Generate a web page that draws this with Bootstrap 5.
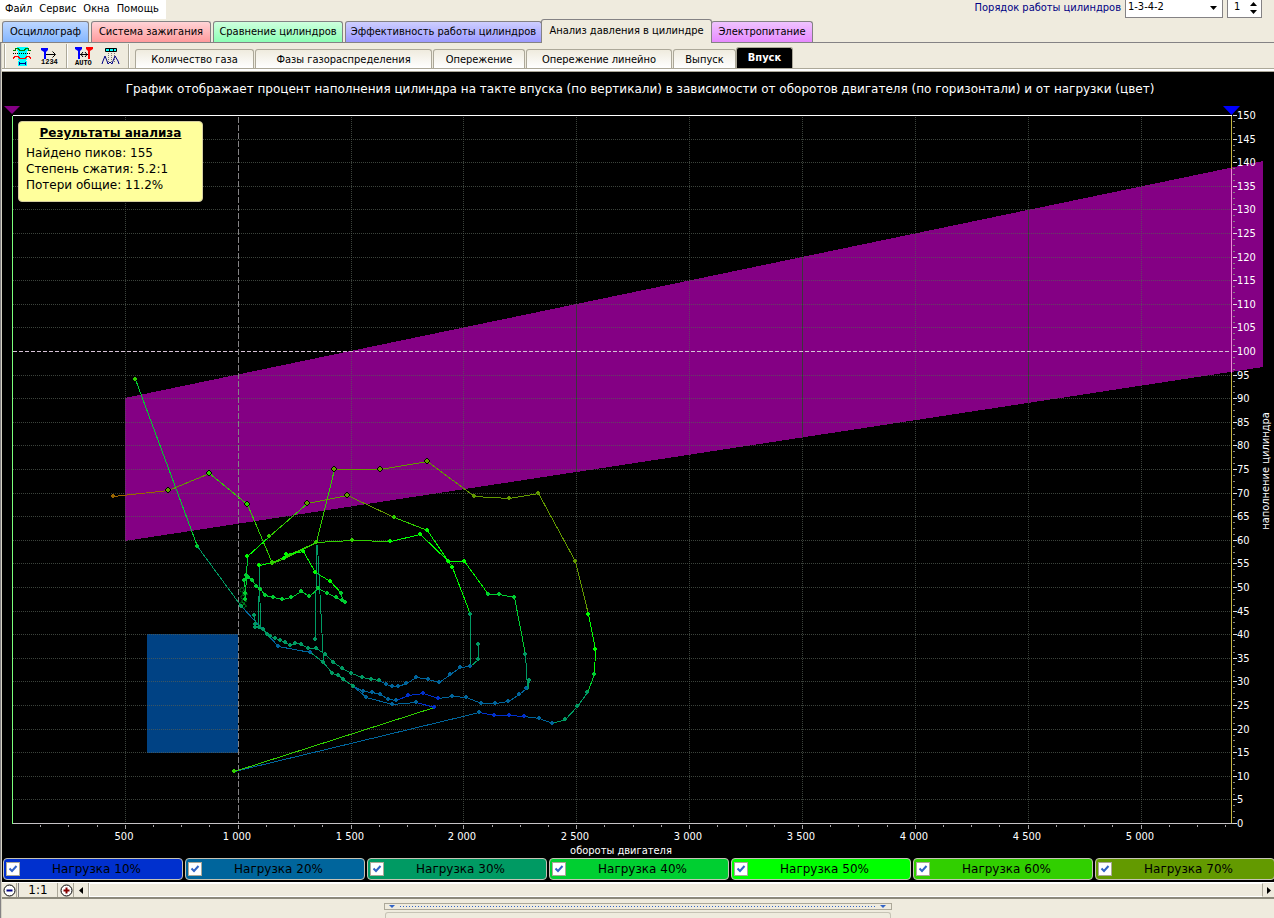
<!DOCTYPE html>
<html lang="ru">
<head>
<meta charset="utf-8">
<meta name="viewport" content="width=device-width, initial-scale=1">
<title>Анализ давления в цилиндре</title>
<link href="https://cdn.jsdelivr.net/npm/bootstrap@5.3.0/dist/css/bootstrap.min.css" rel="stylesheet">
<style>
:root{--face:#efebde;--edge:#848284;--soft:#aca899}
body{background:var(--face);color:#000;font:11px/14px "DejaVu Sans Condensed","DejaVu Sans",sans-serif;overflow-x:hidden}
a{color:#000;text-decoration:none}
.topline{height:21px}
.menu-strip{background:#fff;height:19px;width:166px;padding:2px 0 0 5px;gap:7px}
.order-label{color:#000084;padding-top:1px}
.pick{height:18px;width:98px;border:1px solid var(--edge);border-top:0;border-radius:0;padding:0 2px 3px;background:#fff url("data:image/svg+xml,%3Csvg xmlns='http://www.w3.org/2000/svg' width='7' height='4'%3E%3Cpath d='M0 0h7L3.5 4z'/%3E%3C/svg%3E") no-repeat right 5px top 6px;appearance:none;color:#000;font-size:11px;line-height:14px}
.spin{height:18px;width:35px;border:1px solid var(--edge);border-top:0;background:#fff}
.spin input{width:18px;border:0;padding:0 0 3px 6px;appearance:textfield;-moz-appearance:textfield;background:none}
.spin input::-webkit-inner-spin-button{display:none}
.bare{border:0;background:none;padding:0;color:#000;line-height:1}
.spin .bare{height:8px;width:14px;display:flex;align-items:center;justify-content:center}
.main-tabs{height:22px;border-bottom:1px solid var(--edge);padding-left:2px;gap:2px}
.main-tabs a{height:21px;border:1px solid var(--edge);border-bottom:0;border-radius:3px 3px 0 0;text-align:center;padding-top:3px;white-space:nowrap;flex:none}
.t-blue{background:linear-gradient(#bdd7ff,#84b6ff);width:87px}
.t-red{background:linear-gradient(#ffd3d6,#ff9a9c);width:120px}
.t-green{background:linear-gradient(#ceffde,#8cffb5);width:130px}
.t-violet{background:linear-gradient(#ceceff,#9c9aff);width:197px}
.main-tabs .t-active{background:var(--face);width:171px;height:24px;margin:0 -3px -1px;z-index:1;padding-top:4px}
.t-pink{background:linear-gradient(#efc3ff,#e78aff);width:102px}
.work{border-left:1px solid var(--edge);min-height:875px}
.work-in{border-left:1px solid #d6d3c6}
.tools{height:26px;border-bottom:1px solid var(--soft)}
.tools .bare{height:22px}
.groove{width:2px;height:24px;border-left:1px solid var(--soft);border-right:1px solid #fff;flex:none}
.strip{padding:0 5px 0 2px}
.sub-tabs a{height:19px;border:1px solid var(--soft);border-bottom:0;border-radius:3px 3px 0 0;background:linear-gradient(#efebde,#fff);text-align:center;padding-top:3px;white-space:nowrap;flex:none}
.sub-tabs{gap:1px}
.s1{width:119px}.s2{width:177px}.s3{width:92px}.s4{width:146px}.s5{width:63px}
.sub-tabs .s6{width:57px;height:21px;background:#000;color:#fff;font-weight:bold;margin-left:-1px;border-color:var(--soft)}
.rim{height:3px;background:#fff;border-bottom:1px solid var(--soft)}
.verd{font:12px/16px "DejaVu Sans",sans-serif}
.chart{background:#000}
.chart h1{color:#fff;margin:0;padding:9px 0 4px 4px;text-align:center;white-space:nowrap}
.chart svg{display:block;width:100%;height:auto}
.results{left:16px;top:49px;width:185px;height:81px;background:#ffff9c;border:1px solid #d6cfa0;border-radius:4px;padding:3px 7px}
.results h2{font:bold 12px/16px "DejaVu Sans",sans-serif;text-decoration:underline;text-align:center;margin:0 0 4px}
.legend-row{background:#000;padding:0 0 2px 1px;gap:2px;overflow:hidden}
.legend-row label{flex:1 0 180px;height:22px;border:1px solid #c6c3b5;border-radius:4px;padding:0 9px 0 2px;color:#000}
.legend-row input{appearance:none;width:14px;height:14px;margin:0;border:1px solid var(--soft);background:#fff;flex:none}
.legend-row input:checked{background:#fff url("data:image/svg+xml,%3Csvg xmlns='http://www.w3.org/2000/svg' width='12' height='12'%3E%3Cpath d='M2.5 5.5L5 8l4.500-5' fill='none' stroke='%233163c6' stroke-width='2'/%3E%3C/svg%3E")}
.q10{background:#0030ce}.q20{background:#00659c}.q30{background:#009a63}.q40{background:#00cf31}.q50{background:#00ff00}.q60{background:#31cf00}.q70{background:#639a00}
.scroller{height:17px;border-bottom:2px solid #8c897b;border-top:1px solid #fff}
.scroller .bare{width:15px;height:14px;border-right:1px solid var(--soft);display:flex;align-items:center;justify-content:center}
.scroller .one{width:40px;border-left:1px solid var(--edge);margin:0 1px}
.scroller .last-arrow{width:11px;border-right:0}
.thumb{border:1px solid #fff;border-right-color:var(--soft);height:14px}
.splitter{width:40%;height:7px;border:1px solid var(--soft);margin:4px auto 0}
.dots{height:1px;background:repeating-linear-gradient(90deg,#3163c6 0 1px,transparent 1px 3px)}
.lower{width:506px;max-width:40%;height:7px;margin:2px auto 0;border:1px solid #c6c3b5;border-bottom:0;border-radius:3px 3px 0 0}
</style>
</head>
<body>
<header class="topline d-flex justify-content-between">
  <nav class="menu-strip d-flex" aria-label="Меню">
    <a href="#">Файл</a><a href="#">Сервис</a><a href="#">Окна</a><a href="#">Помощь</a>
  </nav>
  <div class="d-flex pe-2 me-1">
    <label class="order-label me-1" for="order">Порядок работы цилиндров</label>
    <select id="order" class="pick me-1"><option>1-3-4-2</option></select>
    <div class="spin d-flex">
      <input type="number" value="1" aria-label="Номер цилиндра">
      <div>
        <button class="bare" aria-label="Больше"><svg width="7" height="4"><path d="M0 4h7L3.500 0z"/></svg></button>
        <button class="bare" aria-label="Меньше"><svg width="7" height="4"><path d="M0 0h7L3.500 4z"/></svg></button>
      </div>
    </div>
  </div>
</header>
<nav class="main-tabs d-flex align-items-end" aria-label="Разделы">
  <a class="t-blue" href="#">Осциллограф</a><a class="t-red" href="#">Система зажигания</a><a class="t-green" href="#">Сравнение цилиндров</a><a class="t-violet" href="#">Эффективность работы цилиндров</a><a class="t-active" href="#">Анализ давления в цилиндре</a><a class="t-pink" href="#">Электропитание</a>
</nav>
<main class="work"><div class="work-in">
  <div class="tools d-flex align-items-end">
    <div class="strip d-flex align-items-center h-100">
      <div class="groove"></div>
      <button class="bare" aria-label="Область анализа">
        <svg width="31" height="22" viewBox="6 45 31 22" shape-rendering="crispEdges"><path fill="#00ffff" d="M17 47h11v4h-1v9h-1v1h1v5h-9v-5h1v-1h-1V51h-1z"/><path d="M13 53.500h18" stroke="#000" stroke-dasharray="1 1"/><g fill="none"><path d="M13 50.500h2l1-2h2l2 2h4l2-2h2l1 2h2" stroke="#008200"/><path d="M13 58.500l2-2h3l2 2h5l2-2h2l2 2" stroke="red"/><path d="M19 63.500h7M19.500 62v3M25.500 62v3" stroke="#000084"/></g></svg>
      </button>
      <button class="bare" aria-label="Нумерация">
        <svg width="29" height="22" viewBox="37 45 29 22"><path fill="#0000ff" d="M41 48h7v2l-2 2v7h-2v-7l-3-2z"/><path d="M46 54.500h9M52.500 51.500l3 3-3 3" fill="none" stroke="#000"/><text x="41" y="64" font-size="7" font-weight="bold" font-family="Liberation Mono,monospace">1234</text></svg>
      </button>
      <div class="groove"></div>
      <button class="bare" aria-label="Автоматически">
        <svg width="30" height="22" viewBox="68 45 30 22"><path fill="#0000ff" d="M75 47h7v2l-2 2v8h-2v-8l-3-2z"/><path fill="red" d="M86 47h7v2l-3 2v8h-2v-8l-2-2z"/><path d="M80 54.500h8M83 52l-2 2.500 2 2.500M85 52l2 2.500-2 2.500" fill="none" stroke="#000"/><text x="75" y="65" font-size="7" font-weight="bold" font-family="Liberation Mono,monospace">AUTO</text></svg>
      </button>
      <button class="bare" aria-label="Пики">
        <svg width="30" height="22" viewBox="98 45 30 22"><path fill="#00ffff" stroke="#000" d="M105.500 48.500h11v3h-11zM109.500 49v2M113.500 49v2"/><path d="M108.500 53v10M111.500 53v10M114.500 53v10" stroke="#777" stroke-dasharray="1 1"/><path d="M102 64l1-3 2-5 2 5 1 3 2-2 2 2 1-3 2-5 3 5 1 3" fill="none" stroke="#000084"/></svg>
      </button>
      <div class="groove"></div>
    </div>
    <nav class="sub-tabs d-flex align-items-end" aria-label="Графики">
      <a class="s1" href="#">Количество газа</a><a class="s2" href="#">Фазы газораспределения</a><a class="s3" href="#">Опережение</a><a class="s4" href="#">Опережение линейно</a><a class="s5" href="#">Выпуск</a><a class="s6" href="#">Впуск</a>
    </nav>
  </div>
  <div class="rim"></div>
  <section class="chart position-relative">
    <h1 class="verd">График отображает процент наполнения цилиндра на такте впуска (по вертикали) в зависимости от оборотов двигателя (по горизонтали) и от нагрузки (цвет)</h1>
    <svg id="plot" viewBox="2 101 1272 757" font-family="DejaVu Sans Condensed,sans-serif" font-size="11" fill="#fff" role="img" aria-label="Наполнение цилиндра"></svg>
    <aside class="results verd position-absolute"><h2>Результаты анализа</h2>Найдено пиков: 155<br>Степень сжатия: 5.2:1<br>Потери общие: 11.2%</aside>
  </section>
  <div class="legend-row d-flex verd">
    <label class="q10 d-flex align-items-center"><input type="checkbox" checked><span class="flex-fill text-center">Нагрузка 10%</span></label>
    <label class="q20 d-flex align-items-center"><input type="checkbox" checked><span class="flex-fill text-center">Нагрузка 20%</span></label>
    <label class="q30 d-flex align-items-center"><input type="checkbox" checked><span class="flex-fill text-center">Нагрузка 30%</span></label>
    <label class="q40 d-flex align-items-center"><input type="checkbox" checked><span class="flex-fill text-center">Нагрузка 40%</span></label>
    <label class="q50 d-flex align-items-center"><input type="checkbox" checked><span class="flex-fill text-center">Нагрузка 50%</span></label>
    <label class="q60 d-flex align-items-center"><input type="checkbox" checked><span class="flex-fill text-center">Нагрузка 60%</span></label>
    <label class="q70 d-flex align-items-center"><input type="checkbox" checked><span class="flex-fill text-center">Нагрузка 70%</span></label>
  </div>
  <div class="scroller d-flex">
    <button class="bare" aria-label="Уменьшить"><svg width="13" height="13"><circle cx="6.500" cy="6.500" r="5.500" fill="#fff" stroke="#000"/><path d="M3.500 6.500h6" stroke="#000084" stroke-width="2"/></svg></button>
    <button class="bare one verd">1:1</button>
    <button class="bare" aria-label="Увеличить"><svg width="13" height="13"><circle cx="6.500" cy="6.500" r="5.500" fill="#fff" stroke="#000"/><path d="M3.500 6.500h6M6.500 3.500v6" stroke="#840000" stroke-width="2"/></svg></button>
    <button class="bare" aria-label="Влево"><svg width="4" height="7"><path d="M4 0v7L0 3.500z"/></svg></button>
    <div class="thumb flex-fill"></div>
    <button class="bare last-arrow" aria-label="Вправо"><svg width="4" height="7"><path d="M0 0v7l4-3.500z"/></svg></button>
  </div>
  <div class="splitter d-flex align-items-center px-1">
    <svg width="7" height="4" fill="#3163c6"><path d="M0 0h6L3 3z"/></svg><div class="dots flex-fill mx-1"></div><svg width="7" height="4" fill="#3163c6"><path d="M0 0h6L3 3z"/></svg>
  </div>
  <div class="lower"></div>
</div></main>
<script>
const col={1:'#0030ce',2:'#00659c',3:'#009a63',4:'#00cf31',5:'#00ff00',6:'#31cf00',7:'#639a00',8:'#9c6500'};
const px=v=>Math.round(12+v*.2257), py=v=>Math.round(823-v*4.72);
let s='<g shape-rendering="crispEdges" fill="none">';
const line=(x1,y1,x2,y2,c,d)=>{s+=`<path d="M${x1+.5} ${y1+.5}L${x2+.5} ${y2+.5}" stroke="${c}"${d?` stroke-dasharray="${d}"`:''}/>`};
s+='<path fill="#840084" d="M125 398L1263 161V367L125 541z"/><path fill="#004284" d="M147 634h91v119h-91z"/>';
const grid='rgba(85,95,85,.7)';
for(let v=5;v<150;v+=5) if(v!=100) line(12,py(v),1231,py(v),grid,'1 1');
for(let v=500;v<=5000;v+=500) if(v!=1000) line(px(v),116,px(v),823,grid,'1 1');
for(const v of [2500,3500,4500]) line(px(v),py(90+(v-500)/100),px(v),py(60+(v-500)*.00726),'#3c343c');
line(12,py(100),1231,py(100),'#d6c3d6','4 2');
line(px(1000),116,px(1000),823,'#848284','6 2');
line(12,115,1231,115,'#fff'); line(12,115,12,823,'#7bff7b'); line(1231,115,1231,823,'#c6b642'); line(12,823,1235,823,'#c6c3c6');
line(1231,168,1231,372,'#ef86d6');
for(let i=0;i<=120;i++) line(1232,py(i*1.25),i%4?1234:1236,py(i*1.25),i%4?'#848284':'#ddd');
for(let v=125;v<5400;v+=125) line(px(v),824,px(v),v%500?826:828,'#a5a2a5');
/* peaks: x, y, load class; each segment takes the load of its first point */
const runs=[
[[197,546,4],[135,379,6]],
[[241,606,3],[197,546,4]],
[[113,496,8],[168,490,7],[209,473,6],[247,504,6],[272,563,6],[284,558,6],[316,542,6],[334,469,7],[380,469,7],[427,461,7],[474,496,7],[509,498,7],[538,493,7],[575,561,7],[588,614,5],[595,649,5],[594,674,4],[587,692,3],[577,706,3],[565,719,3],[552,723,2],[539,718,2],[524,716,1],[509,715,1],[494,715,1],[479,712,2],[234,771,6],[434,707,1],[416,702,2],[392,704,2],[366,697,2],[353,686,2]],
[[247,556,5],[269,536,6],[307,503,7],[347,495,7],[394,517,6],[427,530,5],[452,567,5],[470,614,3],[470,666,3],[478,659,3],[478,644,3]],
[[259,565,5],[272,562,6],[316,542,6],[352,540,6],[390,541,5],[420,534,5],[448,561,5],[464,561,5],[488,594,4],[499,594,4],[514,597,4],[525,654,3],[527,688,3],[529,680,3]],
[[526,688,2],[519,694,2],[508,701,2],[495,703,2],[481,703,2],[466,697,2],[452,696,2],[438,698,1],[423,693,1],[408,695,1],[396,700,2],[388,699,2],[380,694,2],[372,692,2],[363,691,2],[353,686,3],[343,679,3],[338,675,3],[332,673,3],[323,662,3],[310,652,2],[278,646,2],[241,606,3]],
[[470,666,2],[460,667,2],[450,674,2],[439,682,2],[428,679,2],[416,677,2],[406,683,2],[398,686,2],[392,686,2],[386,684,2],[379,680,3],[371,679,3],[362,677,3],[351,673,3],[342,668,3],[333,662,3],[325,654,3],[316,648,3],[308,648,3],[301,644,3],[295,643,3],[290,645,3],[285,642,3],[280,640,3],[275,638,3],[270,636,3],[267,634,3],[263,629,3],[259,627,3],[255,627,3],[255,624,3],[254,615,3]],
[[286,554,5],[303,551,5],[315,572,5],[330,581,5],[341,593,4],[342,600,4],[345,602,4],[336,597,4],[327,593,4],[318,588,4],[309,596,4],[301,591,4],[291,597,4],[282,599,4],[273,597,4],[265,595,4],[260,589,4],[256,586,4],[252,580,4],[248,577,4],[246,575,4],[244,580,4],[245,593,4],[245,599,4]],
[[284,558,5],[286,554,5]]];
const inBand=(x,y)=>x>125&&y>400&&y<541-(x-125)*.153;
let marks='<g shape-rendering="crispEdges">';
const dot=(x,y,c)=>{
  if(inBand(x,y)) marks+=`<path fill="#000" d="M${x-1} ${y-3}h2v1h1v1h1v2h-1v1h-1v1h-2v-1h-1v-1h-1v-2h1v-1h1z"/>`;
  marks+=`<path fill="${c}" d="M${x-1} ${y-2}h2v1h1v2h-1v1h-2v-1h-1v-2h1z"/>`;
};
for(const r of runs) r.forEach((p,i)=>{
  if(r[i+1]) line(p[0],p[1],r[i+1][0],r[i+1][1],col[p[2]]);
  dot(p[0],p[1],col[p[2]]);
});
line(259,565,258,628,col[3]);line(259,575,260,628,col[3]);line(316,545,315,639,col[3]);line(317,545,323,662,col[3]);line(247,556,245,594,col[4]);
dot(315,639,col[3]);
s+='</g>'+marks+'</g>';
for(const p of [[242,590],[245,594],[243,597],[244,601],[242,604],[244,606],[257,625]]) s+=`<circle cx="${p[0]}" cy="${p[1]}" r="2" fill="none" stroke="${col[p[0]>250?3:4]}" stroke-dasharray="1 1"/>`;
s+='<path fill="#840084" d="M4 106h16l-8 8z"/><path fill="#0000ff" d="M1223 106h17l-8.500 9z"/>';
for(let v=0;v<=150;v+=5) s+=`<text x="1237" y="${py(v)+4}">${v}</text>`;
for(let v=500;v<=5000;v+=500) s+=`<text x="${px(v)-1}" y="840" text-anchor="middle">${v<1000?v:Math.floor(v/1000)+' '+String(v%1000).padStart(3,'0')}</text>`;
s+='<text x="621" y="854" text-anchor="middle">обороты двигателя</text><text transform="translate(1269 471)rotate(-90)" text-anchor="middle">наполнение цилиндра</text>';
document.getElementById('plot').innerHTML=s;
</script>
<script src="https://cdn.jsdelivr.net/npm/bootstrap@5.3.0/dist/js/bootstrap.bundle.min.js"></script>
</body>
</html>
